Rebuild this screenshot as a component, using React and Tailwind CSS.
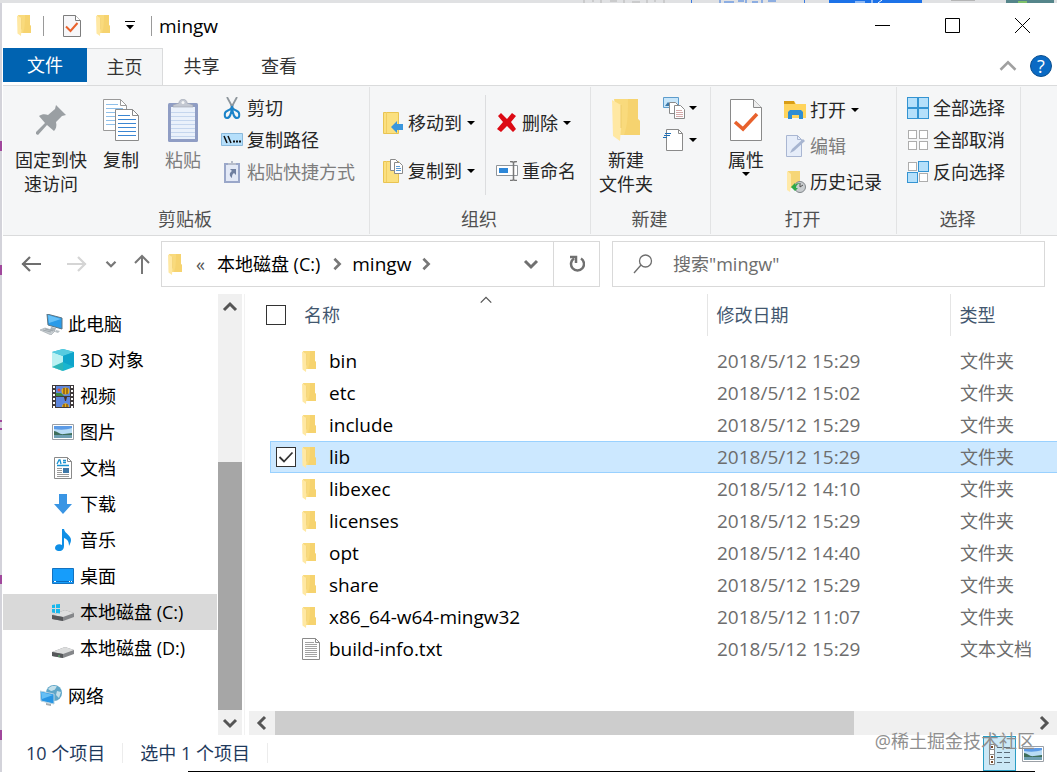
import { useState } from 'react';

const files = [
	{ name: 'bin', date: '2018/5/12 15:29', type: '文件夹' },
	{ name: 'etc', date: '2018/5/12 15:02', type: '文件夹' },
	{ name: 'include', date: '2018/5/12 15:29', type: '文件夹' },
	{ name: 'lib', date: '2018/5/12 15:29', type: '文件夹' },
	{ name: 'libexec', date: '2018/5/12 14:10', type: '文件夹' },
	{ name: 'licenses', date: '2018/5/12 15:29', type: '文件夹' },
	{ name: 'opt', date: '2018/5/12 14:40', type: '文件夹' },
	{ name: 'share', date: '2018/5/12 15:29', type: '文件夹' },
	{ name: 'x86_64-w64-mingw32', date: '2018/5/12 11:07', type: '文件夹' },
	{ name: 'build-info.txt', date: '2018/5/12 15:29', type: '文本文档' },
];

const places = [
	{ label: '3D 对象', Icon: CubeIcon },
	{ label: '视频', Icon: VideoIcon },
	{ label: '图片', Icon: PictureIcon },
	{ label: '文档', Icon: DocumentIcon },
	{ label: '下载', Icon: DownloadIcon },
	{ label: '音乐', Icon: MusicIcon },
	{ label: '桌面', Icon: DesktopIcon },
	{ label: '本地磁盘 (C:)', Icon: SystemDriveIcon, current: true },
	{ label: '本地磁盘 (D:)', Icon: DriveIcon },
];

/* ---------- icons ---------- */

function FolderIcon({ className = 'h-[21px] w-[14px]' }) {
	return (
		<svg viewBox="0 0 14 21" className={`shrink-0 ${className}`} aria-hidden="true">
			<path d="M1 0h12v10l1 1v7H4z" fill="#f9da7c" />
			<path d="M8 0h5v10l1 1v7H6c2-5 2-12 2-18z" fill="#f3cf68" opacity=".6" />
			<path d="M0 .5 4.5 3v11.500L4 21l-3.500-2.500z" fill="#ffe8a3" />
			<path d="M4.500 3v11.500" stroke="#eecb68" strokeWidth=".5" />
		</svg>
	);
}

function CheckPageIcon({ className }) {
	return (
		<svg viewBox="0 0 32 42" className={className} aria-hidden="true">
			<path d="M.5.5h23l8 8v33H.5z" fill="#fff" stroke="#8a8a8a" />
			<path d="M23.500.5v8h8" fill="#eee" stroke="#8a8a8a" />
			<path d="m5 23 8 7 14-15" fill="none" stroke="#e8612c" strokeWidth="3.500" />
		</svg>
	);
}

function SmallCheckPageIcon() {
	return (
		<svg viewBox="0 0 18 22" className="h-[22px] w-[18px]" aria-hidden="true">
			<path d="M.5.5h12l5 5v16H.5z" fill="#f7f7f9" stroke="#7d7d7d" />
			<path d="M12.500.5v5h5" fill="#fff" stroke="#7d7d7d" />
			<path d="m3 11.500 4.500 4.500L14.500 8" fill="none" stroke="#e8612c" strokeWidth="2" />
		</svg>
	);
}

function Caret({ className = '' }) {
	return (
		<svg viewBox="0 0 8 4" className={`h-1 w-2 shrink-0 ${className}`} aria-hidden="true">
			<path d="M0 0h8L4 4z" fill="#000" />
		</svg>
	);
}

function Chevron({ d, className, width = 3 }) {
	return (
		<svg viewBox="0 0 16 16" className={`shrink-0 ${className}`} aria-hidden="true">
			<path d={d} fill="none" stroke="currentColor" strokeWidth={width} />
		</svg>
	);
}

const UP = 'M2 11l6-6 6 6';
const DOWN = 'M2 5l6 6 6-6';
const LEFT = 'M11 2L5 8l6 6';
const RIGHT = 'M5 2l6 6-6 6';

function PinIcon() {
	return (
		<svg viewBox="0 0 30 30" className="h-[30px] w-[30px]" aria-hidden="true">
			<path d="M20 0 30 10l-4 1-6 6c1 4 0 7-2 9l-7-6L2 30l-2-1 0-2 9-9-6-7c3-2 6-2 9-1l7-6z" fill="#9a9fa3" />
		</svg>
	);
}

function CopyIcon() {
	return (
		<svg viewBox="0 0 36 42" className="h-[42px] w-9" aria-hidden="true">
			<path d="M.5.500h17l6 6v25H.5z" fill="#fff" stroke="#9a9a9a" />
			<path d="M17.500.500v6h6" fill="none" stroke="#9a9a9a" />
			<path d="M3 5.500h12M3 9.500h17M3 13.500h17M3 17.500h17M3 21.500h17M3 25.500h17" stroke="#8fc0ea" />
			<path d="M12.500 10.500h17l6 6v25h-23z" fill="#fff" stroke="#8a8a8a" />
			<path d="M29.500 10.500v6h6" fill="none" stroke="#8a8a8a" />
			<path d="M15 16.500h12M15 20.500h18M15 24.500h18M15 28.500h18M15 32.500h18M15 36.500h18" stroke="#3b86d2" />
		</svg>
	);
}

function PasteIcon() {
	return (
		<svg viewBox="0 0 30 43" className="h-[43px] w-[30px]" aria-hidden="true">
			<rect y="4" width="30" height="39" rx="1.500" fill="#8f9dc4" />
			<path d="M3 8h24v32H3z" fill="#eaf1fb" />
			<path d="M3 13.500h24M3 17.500h24M3 21.500h24M3 25.500h24M3 29.500h24M3 33.500h24M3 37.500h24" stroke="#c5d6ee" />
			<path d="M5 8V6l6-2c0-5 8-5 8 0l6 2v2z" fill="#c3c8d2" stroke="#9aa1b0" strokeWidth=".6" />
			<circle cx="15" cy="3.500" r="1.500" fill="#f5f6f7" />
		</svg>
	);
}

function ScissorsIcon() {
	return (
		<svg viewBox="0 0 22 22" className="h-[22px] w-[22px]" aria-hidden="true">
			<path d="M6 0 13 13M16 0 9 13" stroke="#8e969c" strokeWidth="1.800" />
			<path d="M11 11c-1 1-3 2-5 3-3 1-3 7 0 7s4-4 5-10zm0 0c1 1 3 2 5 3 3 1 3 7 0 7s-4-4-5-10z" fill="none" stroke="#1b83c9" strokeWidth="2" />
		</svg>
	);
}

function PathIcon() {
	return (
		<svg viewBox="0 0 22 14" className="h-[14px] w-[22px]" aria-hidden="true">
			<path d="M.500.500h21v12H.500z" fill="#b5dffb" stroke="#8ab9dc" />
			<path d="m3 3 3 7M7 3l3 7" stroke="#111" strokeWidth="1.500" />
			<path d="M12 8.500h2M15 8.500h2M18 8.500h2" stroke="#111" strokeWidth="2" />
		</svg>
	);
}

function PasteShortcutIcon() {
	return (
		<svg viewBox="0 0 22 22" className="h-[22px] w-[22px]" aria-hidden="true">
			<path d="M4 3h14v18H4z" fill="#e3e9f6" stroke="#9aa7c9" strokeWidth="2" />
			<path d="M7 4V2h3V0h2v2h3v2z" fill="#b7bdca" />
			<path d="M9 8h6v6l-2-2c-2 1-2 3-2 5-3-2-3-5 0-7z" fill="#6f7f9f" />
		</svg>
	);
}

function MoveToIcon() {
	return (
		<svg viewBox="0 0 22 24" className="h-6 w-[22px]" aria-hidden="true">
			<path d="M1.500 1.500h15v21h-15z" fill="#fbe07f" stroke="#e9c452" />
			<path d="M4.500 1v21" stroke="#f1cd62" />
			<path d="m9 16 6-6v3h6v6h-6v3z" fill="#3a96dd" />
		</svg>
	);
}

function CopyToIcon() {
	return (
		<svg viewBox="0 0 22 24" className="h-6 w-[22px]" aria-hidden="true">
			<path d="M1.500 2.500h15v21h-15z" fill="#fbe07f" stroke="#e9c452" />
			<path d="M4.500 2v21" stroke="#f1cd62" />
			<path d="M8.500.500h5l3 3v8h-8z" fill="#fff" stroke="#8a8a8a" />
			<path d="M12.500 3.500h5l3 3v8h-8z" fill="#fff" stroke="#8a8a8a" />
			<path d="M14 7.500h4M14 9.500h5M14 11.500h5" stroke="#5b9bd5" />
		</svg>
	);
}

function DeleteIcon() {
	return (
		<svg viewBox="0 0 22 22" className="h-[22px] w-[22px]" aria-hidden="true">
			<path d="m2 4 3-3 6 6 5-6 4 3-5 6 5 7-3 3-6-6-6 6-4-3 6-7z" fill="#dc0a14" />
		</svg>
	);
}

function RenameIcon() {
	return (
		<svg viewBox="0 0 22 20" className="h-5 w-[22px]" aria-hidden="true">
			<path d="M.500 4.500h21v10H.500z" fill="#fff" stroke="#8f9499" />
			<path d="M3 7h9v5H3z" fill="#2d87d8" />
			<path d="M14 .500c2 0 3 0 3.500 1 .500-1 2-1 3.500-1M17.500 1v18M14 19.500c2 0 3 0 3.500-1 .500 1 2 1 3.500 1" fill="none" stroke="#777" strokeWidth="1.500" />
		</svg>
	);
}

function NewItemIcon() {
	return (
		<svg viewBox="0 0 22 22" className="h-[22px] w-[22px]" aria-hidden="true">
			<path d="M.500.500h15v10H.500z" fill="#c8e6fa" stroke="#5d9ccc" />
			<path d="m2 9 3-4 3 3 2-2 4 3z" fill="#3c78a8" />
			<path d="M6.500 5.500h6l3 3v8h-9z" fill="#fff" stroke="#8a8a8a" />
			<path d="M11.500 8.500h6l4 4v9h-10z" fill="#fff" stroke="#8a8a8a" />
			<path d="M13 13.500h6M13 15.500h7M13 17.500h7M13 19.500h7" stroke="#d3a8a8" />
		</svg>
	);
}

function EasyAccessIcon() {
	return (
		<svg viewBox="0 0 22 22" className="h-[22px] w-[22px]" aria-hidden="true">
			<path d="M3.500.500h12l4 4v17h-16z" fill="#fff" stroke="#8a8a8a" />
			<path d="M15.500.500v4h4" fill="none" stroke="#8a8a8a" />
			<path d="M2 4.500h6M1 6.500h6M0 8.500h4" stroke="#1f6fb5" strokeWidth="1.200" />
		</svg>
	);
}

function OpenIcon() {
	return (
		<svg viewBox="0 0 22 20" className="h-5 w-[22px]" aria-hidden="true">
			<path d="M0 1h10l2 3h10v14H0z" fill="#ffd45c" />
			<path d="M0 1h10l1 3H0z" fill="#d99d15" />
			<path d="M4 19v-7l2-2h11l2 2v7h-4v-4H8v4z" fill="#2f8dd3" />
		</svg>
	);
}

function EditIcon() {
	return (
		<svg viewBox="0 0 22 22" className="h-[22px] w-[22px]" aria-hidden="true">
			<path d="M2.500.500h11l4 4v17h-15z" fill="#e6edf9" stroke="#a9b6d2" />
			<path d="M13.500.500v4h4" fill="none" stroke="#a9b6d2" />
			<path d="m6 18 2-4L19 4l2 2L10 16z" fill="#a7b5d0" />
		</svg>
	);
}

function HistoryIcon() {
	return (
		<svg viewBox="0 0 22 22" className="h-[22px] w-[22px]" aria-hidden="true">
			<path d="M4 0h12v17H6z" fill="#f6d677" />
			<path d="m3 0 4 3v12l-1 6-3-2z" fill="#ffe9a8" />
			<circle cx="16" cy="16" r="5.500" fill="#c9cdd0" stroke="#82878b" />
			<path d="M16 12v4l3-2" fill="none" stroke="#555" />
			<path d="m7 16 4-4v2c2-2 4-2 5-2-3 1-4 3-4 5h2l-3 3z" fill="#2fa84a" />
		</svg>
	);
}

function TilesIcon({ kind }) {
	const tiles = [[1, 1], [12, 1], [1, 12], [12, 12]];
	return (
		<svg viewBox="0 0 22 22" className="h-[22px] w-[22px]" aria-hidden="true">
			{tiles.map(([x, y], index) => {
				const on = kind === 'all' || (kind === 'invert' && (index === 1 || index === 2));
				return on ? (
					<rect key={index} x={x - 0.5} y={y - 0.5} width="10" height="10" fill="#b5e0fb" stroke="#3494d2" />
				) : (
					<rect key={index} x={x + 0.5} y={y + 0.5} width="8" height="8" fill="#fff" stroke="#adadad" />
				);
			})}
		</svg>
	);
}

function ComputerIcon() {
	return (
		<svg viewBox="0 0 23 21" className="h-[21px] w-[23px]" aria-hidden="true">
			<path d="m7 0 15 4v11L8 11z" fill="#2a9be8" stroke="#5f7480" />
			<path d="m8 1 13 4-12 4z" fill="#67c1f8" />
			<path d="m11 13 5 1-1 3-5-1z" fill="#aab4ba" />
			<path d="m0 16 5-2 10 3-4 4z" fill="#c8ced2" stroke="#9aa3a8" strokeWidth=".6" />
			<path d="m3 16 8 2M5 15l8 2" stroke="#828c92" strokeWidth=".6" />
			<path d="m16 16 4 1-2 2-3-1z" fill="#b7bfc4" />
		</svg>
	);
}

function CubeIcon() {
	return (
		<svg viewBox="0 0 22 22" className="h-[22px] w-[22px]" aria-hidden="true">
			<path d="M11 0 22 3v15l-11 4L0 18V3z" fill="#19b5cf" />
			<path d="m0 3 11 4v15L0 18z" fill="#b9f1f2" />
			<path d="m0 18 11-5v9z" fill="#2cb6b8" />
			<path d="m0 3 11-3 11 3-11 4z" fill="#57cbe0" />
			<path d="m11 7 11-4v15l-11-5z" fill="#0ea4cb" />
		</svg>
	);
}

function VideoIcon() {
	return (
		<svg viewBox="0 0 22 23" className="h-[23px] w-[22px]" aria-hidden="true">
			<path d="M0 0h22v23H0z" fill="#3f3a3c" />
			<path d="M2 1v22M20 1v22" stroke="#fff" strokeWidth="2" strokeDasharray="2 2" />
			<path d="M4 1h14v10H4zM4 12h14v10H4z" fill="#5d86dd" />
			<ellipse cx="13.500" cy="6" rx="4" ry="3.500" fill="#e8b019" />
			<path d="M10 22c0-5 7-5 7 0z" fill="#e8b019" />
			<path d="M12 3v6M15 3v6M12 19v3M15 19v3" stroke="#5a3211" />
			<path d="M12 12h3l-1 4h-1z" fill="#4a2f1a" />
			<path d="M4 8h5l3 3H4z" fill="#3f8a3c" />
			<circle cx="7" cy="5" r="1.500" fill="#e0503c" />
		</svg>
	);
}

function PictureIcon() {
	return (
		<svg viewBox="0 0 22 16" className="h-4 w-[22px]" aria-hidden="true">
			<path d="M.500.500h21v15H.500z" fill="#fff" stroke="#9ba0a6" />
			<path d="M2 2h18v12H2z" fill="#b9dcf5" />
			<path d="M2 2h18v2c-6 2-12 2-18 1z" fill="#5c9be6" />
			<path d="M2 7c3 0 6 4 10 3l8-1v2H2z" fill="#3f6f5b" />
			<path d="M2 11h18v3H2z" fill="#6f9fb2" />
		</svg>
	);
}

function DocumentIcon() {
	return (
		<svg viewBox="0 0 18 22" className="mx-0.5 h-[22px] w-[18px]" aria-hidden="true">
			<path d="M.500.500h13l4 4v17H.500z" fill="#fff" stroke="#8a8a8a" />
			<path d="M13.500.500v4h4" fill="none" stroke="#8a8a8a" />
			<path d="m3 7 2-4h1l1 4M9 3.500h3M9 5.500h3M3 8.500h12" fill="none" stroke="#1b93d1" strokeWidth="1.300" />
			<path d="M3 11.500h5M3 13.500h5M3 15.500h5M3 17.500h12M3 19.500h12" stroke="#9a9a9a" />
			<path d="M9 11h6v5H9z" fill="#3e78a8" />
		</svg>
	);
}

function DownloadIcon() {
	return (
		<svg viewBox="0 0 22 22" className="h-[22px] w-[22px]" aria-hidden="true">
			<path d="M7 1h8v10h5l-9 10-9-10h5z" fill="#3995e4" />
		</svg>
	);
}

function MusicIcon() {
	return (
		<svg viewBox="0 0 22 22" className="h-[22px] w-[22px]" aria-hidden="true">
			<path d="M10 0h2c1 5 7 6 7 11 0 2-1 4-2 6 0-5-2-7-5-8v8c0 7-9 6-9 2 0-3 4-5 7-3z" fill="#0f8fe6" />
		</svg>
	);
}

function DesktopIcon() {
	return (
		<svg viewBox="0 0 22 16" className="h-4 w-[22px]" aria-hidden="true">
			<path d="M.500.500h21v15H.500z" fill="#169dfb" stroke="#1372c0" />
			<path d="M1 13.500h20" stroke="#0c6cbd" />
			<path d="M2 13.500h2M17 13.500h1M19 13.500h1" stroke="#fff" />
		</svg>
	);
}

function DriveIcon() {
	return (
		<svg viewBox="0 0 22 22" className="h-[22px] w-[22px]" aria-hidden="true">
			<path d="m0 15 13-5 9 3v4l-11 4-11-2z" fill="#85878a" />
			<path d="m0 15 13-5 9 3-11 4z" fill="#dcdddd" />
			<path d="m0 15 11 2v4L0 19z" fill="#55575a" />
			<path d="M6 19h2" stroke="#58c46a" />
		</svg>
	);
}

function SystemDriveIcon() {
	return (
		<svg viewBox="0 0 22 22" className="h-[22px] w-[22px]" aria-hidden="true">
			<path d="m0 14 13-5 9 3v4l-11 4-11-2z" fill="#85878a" />
			<path d="m0 14 13-5 9 3-11 4z" fill="#dedfdf" />
			<path d="m0 14 11 2v4L0 18z" fill="#55575a" />
			<path d="m0 4 3-.500V7H0zM4 3.300 8 3v4H4zM0 8h3v4l-3-.500zM4 8h4v4.500L4 12z" fill="#18b7ec" />
		</svg>
	);
}

function NetworkIcon() {
	return (
		<svg viewBox="0 0 23 22" className="h-[22px] w-[23px]" aria-hidden="true">
			<circle cx="14" cy="8" r="8" fill="#5fa6c8" />
			<path d="M8 4c4-5 8-2 9-3-2 4-2 4-6 5zM17 6l4 1-2 6-3-3z" fill="#c4e0ea" />
			<path d="m0 6 14 3v10L1 16z" fill="#2795e4" stroke="#b9d3e0" />
			<path d="m1 7 12 3-11 4z" fill="#65bff5" />
			<path d="m6 18 5 1v2l-5-1z" fill="#a4adb3" />
		</svg>
	);
}

/* ---------- ribbon parts ---------- */

function RibbonGroup({ label, className, children }) {
	return (
		<section aria-label={label} className={`flex shrink-0 flex-col border-r border-[#e2e3e4] ${className}`}>
			<div className="flex h-[116px] items-start">{children}</div>
			<p className="mt-1 pr-0.5 text-center leading-6 text-[#505050]">{label}</p>
		</section>
	);
}

function BigButton({ icon, lines, disabled, caret, className = '' }) {
	return (
		<button type="button" disabled={disabled} className={`mt-[5px] flex shrink-0 flex-col items-center leading-6 disabled:text-[#7d7d7d] ${className}`}>
			<span className="flex h-14 items-center">{icon}</span>
			{lines.map((line) => (
				<span key={line}>{line}</span>
			))}
			{caret && <Caret />}
		</button>
	);
}

function SmallButton({ icon, label, disabled, caret, title, className = 'h-8' }) {
	return (
		<button type="button" disabled={disabled} aria-label={title} className={`flex items-center gap-1 whitespace-nowrap disabled:text-[#7d7d7d] ${className}`}>
			<span className="flex w-[22px] justify-center">{icon}</span>
			{label}
			{caret && <Caret className={label ? 'ml-px' : ''} />}
		</button>
	);
}

function Ribbon() {
	return (
		<div className="flex h-[151px] shrink-0 overflow-hidden border-y border-[#dadbdc] bg-[#f5f6f7] py-px text-[#262626]">
			<RibbonGroup label="剪贴板" className="w-[367px]">
				<BigButton icon={<PinIcon />} lines={['固定到快', '速访问']} className="ml-3" />
				<BigButton icon={<CopyIcon />} lines={['复制']} className="ml-4" />
				<BigButton icon={<PasteIcon />} lines={['粘贴']} disabled className="ml-[26px]" />
				<div className="mt-[5px] ml-5">
					<SmallButton icon={<ScissorsIcon />} label="剪切" />
					<SmallButton icon={<PathIcon />} label="复制路径" />
					<SmallButton icon={<PasteShortcutIcon />} label="粘贴快捷方式" disabled />
				</div>
			</RibbonGroup>
			<RibbonGroup label="组织" className="w-[221px]">
				<div className="mt-3 ml-3">
					<SmallButton icon={<MoveToIcon />} label="移动到" caret className="h-12" />
					<SmallButton icon={<CopyToIcon />} label="复制到" caret className="h-12" />
				</div>
				<div className="mt-2 ml-2.5 h-[100px] w-px bg-[#dcdddf]" />
				<div className="mt-3 ml-2.5">
					<SmallButton icon={<DeleteIcon />} label="删除" caret className="h-12" />
					<SmallButton icon={<RenameIcon />} label="重命名" className="h-12" />
				</div>
			</RibbonGroup>
			<RibbonGroup label="新建" className="w-[120px]">
				<BigButton icon={<FolderIcon className="h-[42px] w-7" />} lines={['新建', '文件夹']} className="ml-2" />
				<div className="mt-[5px] ml-2.5">
					<SmallButton icon={<NewItemIcon />} caret title="新建项目" />
					<SmallButton icon={<EasyAccessIcon />} caret title="轻松访问" />
				</div>
			</RibbonGroup>
			<RibbonGroup label="打开" className="w-[186px]">
				<BigButton icon={<CheckPageIcon className="h-[42px] w-8" />} lines={['属性']} caret className="ml-[17px]" />
				<div className="mt-[5px] ml-5">
					<SmallButton icon={<OpenIcon />} label="打开" caret className="h-9" />
					<SmallButton icon={<EditIcon />} label="编辑" disabled className="h-9" />
					<SmallButton icon={<HistoryIcon />} label="历史记录" className="h-9" />
				</div>
			</RibbonGroup>
			<RibbonGroup label="选择" className="w-[124px]">
				<div className="mt-[5px] ml-2.5">
					<SmallButton icon={<TilesIcon kind="all" />} label="全部选择" />
					<SmallButton icon={<TilesIcon kind="none" />} label="全部取消" />
					<SmallButton icon={<TilesIcon kind="invert" />} label="反向选择" />
				</div>
			</RibbonGroup>
		</div>
	);
}

/* ---------- window parts ---------- */

function TitleBar() {
	return (
		<header className="flex h-[45px] shrink-0 items-center pl-[14px]">
			<FolderIcon />
			<span className="ml-3 h-5 w-px bg-[#9a9a9a]" />
			<button type="button" aria-label="属性" className="ml-[19px]">
				<SmallCheckPageIcon />
			</button>
			<button type="button" aria-label="新建文件夹" className="ml-[15px]">
				<FolderIcon />
			</button>
			<button type="button" aria-label="自定义快速访问工具栏" className="ml-[15px]">
				<svg viewBox="0 0 10 9" className="h-[9px] w-2.5" aria-hidden="true">
					<path d="M0 .500h10" stroke="#000" />
					<path d="M1 4h8L5 8.500z" fill="#000" />
				</svg>
			</button>
			<span className="ml-4 h-5 w-px bg-[#9a9a9a]" />
			<h1 className="ml-[7px] flex-1 text-[19px] leading-6">mingw</h1>
			<button type="button" aria-label="最小化" className="flex w-[70px] justify-center">
				<svg viewBox="0 0 15 15" className="h-[15px] w-[15px]" aria-hidden="true">
					<path d="M0 7.500h15" stroke="#000" />
				</svg>
			</button>
			<button type="button" aria-label="最大化" className="flex w-[70px] justify-center">
				<svg viewBox="0 0 15 15" className="h-[15px] w-[15px]" aria-hidden="true">
					<path d="M.500.500h14v14H.500z" fill="none" stroke="#000" />
				</svg>
			</button>
			<button type="button" aria-label="关闭" className="flex w-[70px] justify-center">
				<svg viewBox="0 0 15 15" className="h-[15px] w-[15px]" aria-hidden="true">
					<path d="m0 0 15 15M15 0 0 15" stroke="#000" />
				</svg>
			</button>
		</header>
	);
}

function TabBar() {
	return (
		<div className="flex h-[37px] shrink-0 text-[#333]">
			<button type="button" className="mb-[3px] w-[84px] bg-[#0063b1] text-white">文件</button>
			<button type="button" className="-mb-px w-[76px] border-t border-r border-[#dadbdc] bg-[#f5f6f7]">主页</button>
			<button type="button" className="w-[77px]">共享</button>
			<button type="button" className="w-[78px]">查看</button>
			<div className="ml-auto flex items-center gap-3 pr-[5px] pb-0.5">
				<button type="button" aria-label="最小化功能区">
					<Chevron d={UP} width={2} className="h-5 w-5 text-[#a0a0a0]" />
				</button>
				<button type="button" aria-label="帮助" className="h-[22px] w-[22px] rounded-full border border-[#0a4f8f] bg-[#0a6ac4] leading-5 text-white">?</button>
			</div>
		</div>
	);
}

function AddressBar() {
	return (
		<div className="flex h-[58px] shrink-0 items-center pt-[5px] pr-3 pb-[7px] pl-4">
			<button type="button" aria-label="后退">
				<svg viewBox="0 0 24 20" className="h-5 w-6 text-[#6e6e6e]" aria-hidden="true">
					<path d="M3 10h19M11 3 4 10l7 7" fill="none" stroke="currentColor" strokeWidth="2.200" />
				</svg>
			</button>
			<button type="button" aria-label="前进" className="ml-[22px]">
				<svg viewBox="0 0 24 20" className="h-5 w-6 text-[#d5d5d5]" aria-hidden="true">
					<path d="M2 10h19M13 3l7 7-7 7" fill="none" stroke="currentColor" strokeWidth="2.200" />
				</svg>
			</button>
			<button type="button" aria-label="最近浏览的位置" className="ml-4">
				<Chevron d={DOWN} className="h-3 w-3 text-[#777]" />
			</button>
			<button type="button" aria-label="上移" className="ml-4">
				<svg viewBox="0 0 18 20" className="h-5 w-[18px] text-[#777]" aria-hidden="true">
					<path d="M9 20V2M2 9l7-7 7 7" fill="none" stroke="currentColor" strokeWidth="2" />
				</svg>
			</button>
			<div className="ml-2.5 flex h-[46px] flex-1 items-center border border-[#d9d9d9] pl-1.5">
				<FolderIcon />
				<span className="ml-3.5 text-[#555]">«</span>
				<button type="button" className="ml-3 whitespace-nowrap">本地磁盘 (C:)</button>
				<Chevron d={RIGHT} className="ml-2.5 h-3.5 w-3.5 text-[#777]" />
				<button type="button" className="ml-2 text-[19px]">mingw</button>
				<Chevron d={RIGHT} className="ml-2 h-3.5 w-3.5 text-[#777]" />
				<button type="button" aria-label="以前的位置" className="ml-auto px-3.5">
					<Chevron d={DOWN} className="h-4 w-4 text-[#707070]" />
				</button>
				<button type="button" aria-label="刷新" className="flex w-[46px] items-center justify-center self-stretch border-l border-[#d9d9d9]">
					<svg viewBox="0 0 16 18" className="h-[18px] w-4" aria-hidden="true">
						<path d="M12 3.500a6.500 6.500 0 1 1-7 0" fill="none" stroke="#707070" strokeWidth="2.500" />
						<path d="M1 2h6v6" fill="none" stroke="#707070" strokeWidth="2.500" />
					</svg>
				</button>
			</div>
			<label className="ml-3 flex h-[46px] w-[433px] items-center border border-[#d9d9d9] pl-5">
				<svg viewBox="0 0 20 20" className="h-5 w-5 shrink-0" aria-hidden="true">
					<circle cx="12.500" cy="7" r="6" fill="none" stroke="#6e6e6e" strokeWidth="1.300" />
					<path d="m8 11-7 8" stroke="#6e6e6e" strokeWidth="1.300" />
				</svg>
				<input type="search" aria-label="搜索" placeholder={'搜索"mingw"'} className="ml-5 min-w-0 flex-1 outline-none placeholder:text-[#6d6d6d]" />
			</label>
		</div>
	);
}

function NavRow({ Icon, label, current, className }) {
	return (
		<li>
			<a href="#" aria-current={current ? 'page' : undefined} className={`flex h-9 items-center whitespace-nowrap ${current ? 'bg-[#d9d9d9]' : ''} ${className}`}>
				<Icon />
				{label}
			</a>
		</li>
	);
}

function Sidebar() {
	return (
		<nav className="flex w-[242px] shrink-0 border-r border-[#f2f2f2]">
			<ul className="w-[214px] pt-3">
				<NavRow Icon={ComputerIcon} label="此电脑" className="gap-[5px] pl-[37px]" />
				{places.map((place) => (
					<NavRow key={place.label} {...place} className="gap-1.5 pl-[49px]" />
				))}
				<li className="h-3" />
				<NavRow Icon={NetworkIcon} label="网络" className="gap-[5px] pl-[37px]" />
			</ul>
			<div className="ml-px flex w-6 flex-col bg-[#f0f0f0] text-[#555]">
				<button type="button" aria-label="向上滚动" className="flex h-[26px] items-center justify-center">
					<Chevron d={UP} className="h-4 w-4" />
				</button>
				<div className="flex-1" />
				<div className="h-[248px] bg-[#a6a6a6]" />
				<button type="button" aria-label="向下滚动" className="flex h-[25px] items-center justify-center">
					<Chevron d={DOWN} className="h-4 w-4" />
				</button>
			</div>
		</nav>
	);
}

function TextFileIcon() {
	return (
		<svg viewBox="0 0 18 22" className="h-[22px] w-[18px] shrink-0" aria-hidden="true">
			<path d="M.500.500h13l4 4v17H.500z" fill="#fff" stroke="#8a8a8a" />
			<path d="M13.500.500v4h4" fill="none" stroke="#8a8a8a" />
			<path d="M3 4.500h9M3 6.500h12M3 8.500h12M3 10.500h12M3 12.500h12M3 14.500h12M3 16.500h12M3 18.500h12" stroke="#a3a3a3" />
		</svg>
	);
}

function FileTable() {
	const [selected, setSelected] = useState(['lib']);

	function toggle(name) {
		setSelected((current) => (current.includes(name) ? current.filter((item) => item !== name) : [...current, name]));
	}

	return (
		<div className="flex-1 pl-[21px]">
			<table className="w-full table-fixed text-left">
				<colgroup>
					<col className="w-[36px]" />
					<col className="w-[405px]" />
					<col className="w-[243px]" />
					<col />
				</colgroup>
				<thead className="text-[#43576f]">
					<tr className="h-[42px]">
						<th colSpan={2} className="relative border-r border-[#e5e5e5] font-normal">
							<Chevron d={UP} width={1.5} className="absolute -top-px left-1/2 h-3.5 w-3.5 -translate-x-1/2 text-[#555]" />
							<label className="flex items-center gap-[18px]">
								<input
									type="checkbox"
									aria-label="全选"
									checked={selected.length === files.length}
									onChange={(event) => setSelected(event.target.checked ? files.map((file) => file.name) : [])}
									className="h-5 w-5 appearance-none border border-[#333] bg-white checked:bg-[#cce8ff]"
								/>
								名称
							</label>
						</th>
						<th className="border-r border-[#e5e5e5] pl-[9px] font-normal">修改日期</th>
						<th className="pl-[9px] font-normal">类型</th>
					</tr>
				</thead>
				<tbody>
					<tr className="h-[9px]" />
					{files.map((file) => {
						const isSelected = selected.includes(file.name);
						const band = isSelected ? 'border-[#99d1ff] bg-[#cce8ff]' : 'border-transparent';
						return (
							<tr key={file.name} className="group">
								<td className="p-0">
									<div className={`ml-1 flex h-8 items-center border-y border-l pl-[5px] ${band}`}>
										<div className={`relative h-5 w-5 ${isSelected ? '' : 'opacity-0 group-hover:opacity-100'}`}>
											<input
												type="checkbox"
												aria-label={file.name}
												checked={isSelected}
												onChange={() => toggle(file.name)}
												className="block h-5 w-5 appearance-none border border-[#333] bg-white"
											/>
											{isSelected && (
												<svg viewBox="0 0 20 20" className="pointer-events-none absolute inset-0 h-5 w-5" aria-hidden="true">
													<path d="m3.500 10 4.500 4.500L16.500 5.500" fill="none" stroke="#333" strokeWidth="1.800" />
												</svg>
											)}
										</div>
									</div>
								</td>
								<td className="p-0">
									<div className={`flex h-8 items-center border-y text-[19px] ${band}`}>
										<span className="flex w-[27px]">{file.name.endsWith('.txt') ? <TextFileIcon /> : <FolderIcon />}</span>
										{file.name}
									</div>
								</td>
								<td className="p-0">
									<div className={`flex h-8 items-center border-y pl-[10px] text-[19px] text-[#6d6d6d] ${band}`}>{file.date}</div>
								</td>
								<td className="p-0">
									<div className={`flex h-8 items-center border-y pl-[10px] text-[#6d6d6d] ${band}`}>{file.type}</div>
								</td>
							</tr>
						);
					})}
				</tbody>
			</table>
		</div>
	);
}

function StatusBar() {
	return (
		<footer className="relative flex h-9 shrink-0 items-center pl-[23px] text-[#1e395b]">
			<span>10 个项目</span>
			<span className="mx-[17px] h-5 w-px bg-[#ececec]" />
			<span>选中 1 个项目</span>
			<span className="mx-[17px] h-5 w-px bg-[#ececec]" />
			<div className="ml-auto flex self-stretch pt-px pr-[13px]">
				<button type="button" aria-label="详细信息" className="flex w-[33px] items-center justify-center border border-[#2a9dc4] bg-[#cbe8f6]">
					<svg viewBox="0 0 22 22" className="h-[22px] w-[22px]" aria-hidden="true">
						<path d="M.500 1.500h5v5h-5zM.500 6.500h5v5h-5zM.500 11.500h5v5h-5zM.500 16.500h5v5h-5z" fill="#fff" stroke="#8a8a8a" />
						<path d="M2 4h2M2 14h2M2 19h2" stroke="#7a4b2a" strokeWidth="2" />
						<path d="M8 4.500h5M15 4.500h6M8 9.500h5M15 9.500h6M8 14.500h5M15 14.500h6M8 19.500h5M15 19.500h6" stroke="#5b6b78" />
					</svg>
				</button>
				<button type="button" aria-label="大图标" className="ml-1.5 flex items-center">
					<PictureIcon />
				</button>
			</div>
			<span className="pointer-events-none absolute right-[22px] bottom-[18px] leading-6 text-[#8f8f8f]">@稀土掘金技术社区</span>
		</footer>
	);
}

// Slivers of the page behind the window, along its top and left edges
function BackdropTop() {
	return (
		<div className="flex h-[3px] shrink-0 justify-end overflow-hidden bg-[#e0e1e3]">
			<svg viewBox="0 0 497 3" className="h-[3px] w-[497px]" aria-hidden="true">
				<path d="M24 0v3M33 0v2M41 0v3M50 1h7M64 0v3M72 2h8M87 0v3M95 0v2M104 0v3" stroke="#b5b5b5" />
				<path d="M131.500 0v3M160 0v3M164 2h10M178 1h6M186 0v3M192 2h6M202 0v3M208 1h8M244.500 0v3" stroke="#3b7be0" />
				<path d="M269 0h93v3h-93z" fill="#1d72e8" />
				<path d="M295 2h10M312 0v3M322 0l-4 3" stroke="#fff" />
				<path d="M391 0h24v1h-24z" fill="#b5b5b5" />
				<path d="M446 0h48v3h-48z" fill="#55858a" />
				<path d="M458 1h9v2h-9z" fill="#7ec06a" />
			</svg>
		</div>
	);
}

function BackdropLeft() {
	return (
		<svg viewBox="0 0 2 769" className="h-[769px] w-0.5 shrink-0" aria-hidden="true">
			<path d="M0 0h2v769H0z" fill="#d3d3da" />
			<path d="M0 138h2v10H0zM0 262h2v10H0zM0 417h2v2H0zM0 425h2v2H0zM0 572h2v9H0zM0 727h2v10H0z" fill="#a0479c" />
		</svg>
	);
}

export default function App() {
	return (
		<div className="flex min-h-screen flex-col bg-white font-['Open_Sans','Noto_Sans_CJK_SC',sans-serif] text-[18px] text-black">
			<BackdropTop />
			<div className="flex flex-1 overflow-hidden">
				<BackdropLeft />
				<main className="flex min-w-0 flex-1 flex-col">
					<div className="flex flex-1 flex-col pl-px">
						<TitleBar />
						<TabBar />
						<Ribbon />
						<AddressBar />
						<div className="flex flex-1">
							<Sidebar />
							<div className="flex min-w-0 flex-1 flex-col">
								<FileTable />
								<div className="ml-1 flex h-6 items-center bg-[#f0f0f0] text-[#555]">
									<button type="button" aria-label="向左滚动" className="flex w-[26px] justify-center">
										<Chevron d={LEFT} className="h-4 w-4" />
									</button>
									<div className="h-6 w-[579px] bg-[#cdcdcd]" />
									<button type="button" aria-label="向右滚动" className="ml-auto flex w-[26px] justify-center">
										<Chevron d={RIGHT} className="h-4 w-4" />
									</button>
								</div>
							</div>
						</div>
						<StatusBar />
					</div>
					<div className="mr-[22px] ml-[186px] h-px bg-black" />
				</main>
			</div>
		</div>
	);
}
